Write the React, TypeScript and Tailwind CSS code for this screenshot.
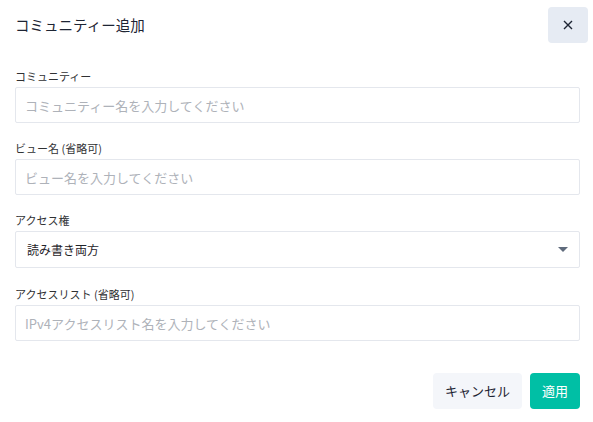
import React from 'react';

const font = { fontFamily: '"Noto Sans CJK JP", "Noto Sans", sans-serif' };

interface FieldProps {
  label: string;
  placeholder?: string;
  value?: string;
  select?: boolean;
}

const Field: React.FC<FieldProps> = ({ label, placeholder, value, select }) => (
  <div className="flex flex-col">
    <label className="text-[11px] leading-4 text-[#303133] mb-[3px]">{label}</label>
    {select ? (
      <div className="h-[37px] border border-[#e4e7ed] rounded-[2px] flex items-center justify-between pl-[11px] pr-[10px]">
        <span className="text-[12px] text-[#1f2329]">{value}</span>
        <svg width="12" height="7" viewBox="0 0 12 7">
          <path d="M1 1h10L6 6z" fill="#5f6b7c" />
        </svg>
      </div>
    ) : (
      <input
        className="h-[36px] border border-[#e4e7ed] rounded-[2px] px-[9px] text-[13px] outline-none placeholder:text-[#aeb2b9]"
        style={font}
        placeholder={placeholder}
      />
    )}
  </div>
);

export default function App() {
  return (
    <div className="w-[593px] h-[422px] bg-white pl-[15px] pr-[13px]" style={font}>
      <div className="h-[50px] flex items-center justify-between">
        <h1 className="text-[14.5px] text-[#1d2433] font-normal">コミュニティー追加</h1>
        <button className="w-[40px] h-[36px] -mr-[8px] rounded-[4px] bg-[#e6ebf3] flex items-center justify-center">
          <svg width="10" height="10" viewBox="0 0 10 10">
            <path d="M1 1l8 8M9 1l-8 8" stroke="#1d2433" strokeWidth="1.4" />
          </svg>
        </button>
      </div>
      <div className="mt-[18px] flex flex-col gap-[17px]">
        <Field label="コミュニティー" placeholder="コミュニティー名を入力してください" />
        <Field label="ビュー名 (省略可)" placeholder="ビュー名を入力してください" />
        <Field label="アクセス権" value="読み書き両方" select />
        <div className="mt-px">
          <Field label="アクセスリスト (省略可)" placeholder="IPv4アクセスリスト名を入力してください" />
        </div>
      </div>
      <div className="mt-[32px] flex justify-end gap-[8px]">
        <button className="w-[89px] h-[36px] rounded-[4px] bg-[#f4f6fa] text-[13px] text-[#1d2433]">キャンセル</button>
        <button className="w-[50px] h-[36px] rounded-[4px] bg-[#00bfa5] text-[13px] text-white">適用</button>
      </div>
    </div>
  );
}
